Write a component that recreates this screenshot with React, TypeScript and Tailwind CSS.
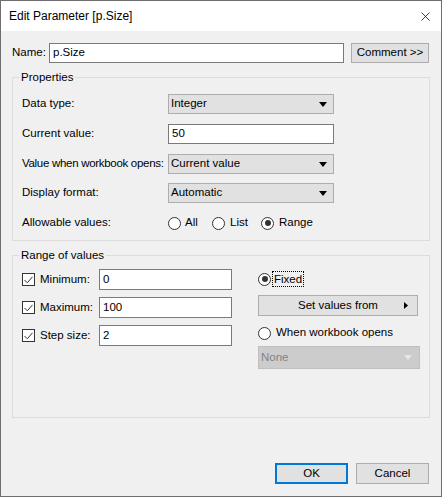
import { X } from "lucide-react";

const font = "font-['Liberation_Sans',Arial,sans-serif] text-[11.5px] text-black";

function Dropdown({ value, disabled }: { value: string; disabled?: boolean }) {
  return (
    <div
      className={
        disabled
          ? "flex h-[23px] w-[162px] items-center justify-between border border-[#bfbfbf] bg-[#cccccc] pl-[2px] pr-[7px] text-[#838383]"
          : "flex h-[20px] w-[166px] items-center justify-between border border-[#adadad] bg-[#e1e1e1] pl-[2px] pr-[6px]"
      }
    >
      <span>{value}</span>
      <svg width="8" height="5" viewBox="0 0 8 5">
        <path d="M0 0H8L4 5Z" fill={disabled ? "#e6e6e6" : "#000"} />
      </svg>
    </div>
  );
}

function TextBox({ value, className }: { value: string; className: string }) {
  return (
    <div className={`flex items-center border border-[#7a7a7a] bg-white pl-[3px] ${className}`}>
      {value}
    </div>
  );
}

function Radio({ checked }: { checked?: boolean }) {
  return (
    <span className="flex h-[13px] w-[13px] shrink-0 items-center justify-center rounded-full border border-[#333333] bg-white">
      {checked && <span className="h-[6px] w-[6px] rounded-full bg-[#333333]" />}
    </span>
  );
}

function Check() {
  return (
    <span className="flex h-[13px] w-[13px] shrink-0 items-center justify-center border border-[#333333] bg-white">
      <svg width="9" height="8" viewBox="0 0 9 8">
        <path d="M0.5 4L3.3 6.8L8.5 0.8" stroke="#333333" strokeWidth="1" fill="none" />
      </svg>
    </span>
  );
}

function GroupBox({ title, className, children }: { title: string; className: string; children: React.ReactNode }) {
  return (
    <div className={`relative border border-[#dcdcdc] ${className}`}>
      <span className="absolute left-[6px] top-[-9px] bg-[#f0f0f0] px-[2px] leading-[16px]">{title}</span>
      {children}
    </div>
  );
}

function RangeRow({ label, value }: { label: string; value: string }) {
  return (
    <div className="flex h-[21px] items-center">
      <Check />
      <span className="ml-[5px] w-[59px]">{label}</span>
      <TextBox value={value} className="h-[21px] w-[133px]" />
    </div>
  );
}

export default function App() {
  return (
    <div className={`flex h-[497px] w-[442px] flex-col border border-[#6e6e6e] bg-[#f0f0f0] ${font}`}>
      <div className="flex h-[30px] shrink-0 items-center justify-between bg-white pl-[8px] pr-[8px] text-[12px]">
        <span>Edit Parameter [p.Size]</span>
        <X size={15} strokeWidth={1.2} className="text-black" />
      </div>

      <div className="flex flex-1 flex-col px-[11px] pt-[12px]">
        <div className="flex items-center">
          <span className="w-[37px]">Name:</span>
          <TextBox value="p.Size" className="h-[20px] w-[295px]" />
          <button className="ml-[7px] h-[20px] w-[78px] border border-[#adadad] bg-[#e1e1e1]">Comment &gt;&gt;</button>
        </div>

        <GroupBox title="Properties" className="mt-[14px] h-[164px] w-[418px] pl-[9px] pt-[16px]">
          <div className="flex flex-col">
            <div className="flex h-[20px] items-center">
              <span className="w-[146px]">Data type:</span>
              <Dropdown value="Integer" />
            </div>
            <div className="mt-[10px] flex h-[20px] items-center">
              <span className="w-[146px]">Current value:</span>
              <TextBox value="50" className="h-[20px] w-[166px]" />
            </div>
            <div className="mt-[10px] flex h-[20px] items-center">
              <span className="w-[146px] tracking-[-0.3px]">Value when workbook opens:</span>
              <Dropdown value="Current value" />
            </div>
            <div className="mt-[9px] flex h-[20px] items-center">
              <span className="w-[146px]">Display format:</span>
              <Dropdown value="Automatic" />
            </div>
            <div className="mt-[10px] flex h-[20px] items-center">
              <span className="w-[146px]">Allowable values:</span>
              <Radio />
              <span className="ml-[4px] w-[27px]">All</span>
              <Radio />
              <span className="ml-[5px] w-[31px]">List</span>
              <Radio checked />
              <span className="ml-[5px]">Range</span>
            </div>
          </div>
        </GroupBox>

        <GroupBox title="Range of values" className="mt-[14px] flex h-[163px] w-[418px] pl-[9px] pt-[13px]">
          <div className="flex flex-col gap-[7px]">
            <RangeRow label="Minimum:" value="0" />
            <RangeRow label="Maximum:" value="100" />
            <RangeRow label="Step size:" value="2" />
          </div>
          <div className="ml-[26px] flex flex-col">
            <div className="flex h-[20px] items-center">
              <Radio checked />
              <span className="ml-[1px] border border-dotted border-black px-[1px] leading-[14px]">Fixed</span>
            </div>
            <button className="relative mt-[6px] flex h-[21px] w-[160px] items-center justify-center border border-[#adadad] bg-[#e1e1e1]">
              Set values from
              <svg width="4" height="7" viewBox="0 0 4 7" className="absolute right-[9px] top-[6px]">
                <path d="M0 0L4 3.5L0 7Z" fill="#000" />
              </svg>
            </button>
            <div className="mt-[7px] flex h-[20px] items-center">
              <Radio />
              <span className="ml-[5px]">When workbook opens</span>
            </div>
            <div className="mt-[3px]">
              <Dropdown value="None" disabled />
            </div>
          </div>
        </GroupBox>

        <div className="mt-[45px] flex justify-end gap-[8px] pr-[1px]">
          <button className="h-[21px] w-[73px] border-2 border-[#0078d7] bg-[#e1e1e1]">OK</button>
          <button className="h-[21px] w-[73px] border border-[#adadad] bg-[#e1e1e1]">Cancel</button>
        </div>
      </div>
    </div>
  );
}
